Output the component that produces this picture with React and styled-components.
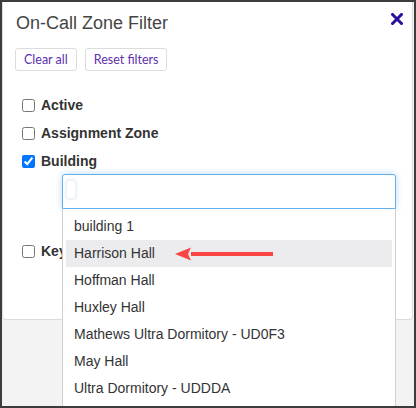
import styled, { createGlobalStyle } from "styled-components";

const GlobalStyle = createGlobalStyle`
  html, body {
    margin: 0;
    padding: 0;
    background: #3c3c3c;
  }
  * {
    box-sizing: border-box;
  }
`;

const buildings = [
  "building 1",
  "Harrison Hall",
  "Hoffman Hall",
  "Huxley Hall",
  "Mathews Ultra Dormitory - UD0F3",
  "May Hall",
  "Ultra Dormitory - UDDDA",
];

const filters = [
  { label: "Active", checked: false },
  { label: "Assignment Zone", checked: false },
  { label: "Building", checked: true },
];

const App = () => {
  return (
    <>
      <GlobalStyle />
      <Frame>
        <Modal>
          <Header>
            <Title>On-Call Zone Filter</Title>
            <CloseButton aria-label="close">
              <svg width="12" height="12" viewBox="0 0 12 12">
                <path
                  d="M1.5 1.5 L10.5 10.5 M10.5 1.5 L1.5 10.5"
                  stroke="#2a109c"
                  strokeWidth="3"
                  strokeLinecap="square"
                />
              </svg>
            </CloseButton>
          </Header>

          <ButtonRow>
            <GhostButton>Clear all</GhostButton>
            <GhostButton>Reset filters</GhostButton>
          </ButtonRow>

          <FilterList>
            {filters.map((f) => (
              <FilterRow key={f.label}>
                <Check type="checkbox" defaultChecked={f.checked} />
                <Label>{f.label}</Label>
              </FilterRow>
            ))}

            <SelectWrap>
              <SearchBox>
                <Caret />
              </SearchBox>
              <Menu>
                {buildings.map((b) => (
                  <MenuItem key={b} active={b === "Harrison Hall"}>
                    {b}
                  </MenuItem>
                ))}
              </Menu>
              {/* annotation arrow pointing at the hovered option */}
              <Arrow width="100" height="16" viewBox="0 0 100 16">
                <path d="M16 6 L98 6 L98 10 L16 10 Z" fill="#fb4444" />
                <path d="M0 8 L16 1.5 L13 8 L16 14.5 Z" fill="#fb4444" />
              </Arrow>
            </SelectWrap>

            <FilterRow>
              <Check type="checkbox" />
              <Label>Keys</Label>
            </FilterRow>
          </FilterList>
        </Modal>
      </Frame>
    </>
  );
};

const Frame = styled.div`
  position: relative;
  width: 416px;
  height: 408px;
  border: 2px solid #3c3c3c;
  background: #f3f3f3;
  overflow: hidden;
`;

const Modal = styled.div`
  width: 411px;
  height: 318px;
  background: #fff;
  border: 1px solid #dcdcdc;
  border-top: none;
  border-radius: 0 0 4px 4px;
  padding: 0 12px;
`;

const Header = styled.div`
  display: flex;
  justify-content: space-between;
  align-items: flex-start;
  padding-top: 9px;
`;

const Title = styled.h2`
  margin: 0;
  padding-left: 1px;
  font-family: "Liberation Sans", Arial, sans-serif;
  font-weight: 400;
  font-size: 18px;
  line-height: 24px;
  color: #454545;
`;

const CloseButton = styled.button`
  border: none;
  background: none;
  padding: 0;
  margin: 2px -3px 0 0;
  display: flex;
  cursor: pointer;
`;

const ButtonRow = styled.div`
  display: flex;
  gap: 8px;
  margin-top: 13px;
`;

const GhostButton = styled.button`
  height: 23px;
  padding: 0 8px;
  border: 1px solid #dcdcdc;
  border-radius: 3px;
  background: #fff;
  font-family: Lato, "Open Sans", sans-serif;
  font-size: 12.5px;
  color: #5b30ad;
  cursor: pointer;
`;

const FilterList = styled.div`
  margin-top: 20px;
  padding-left: 7px;
`;

const FilterRow = styled.label`
  display: flex;
  align-items: center;
  gap: 6px;
  height: 28px;
`;

const Check = styled.input`
  width: 13px;
  height: 13px;
  margin: 0;
`;

const Label = styled.span`
  font-family: "Liberation Sans", Arial, sans-serif;
  font-weight: 700;
  font-size: 14px;
  color: #333;
`;

const SelectWrap = styled.div`
  position: relative;
  margin: -1px 0 28px 40px;
  width: 334px;
`;

const SearchBox = styled.div`
  height: 35px;
  border: 1px solid #66afe9;
  border-radius: 3px 3px 0 0;
  box-shadow: 0 0 7px rgba(102, 175, 233, 0.45);
  background: #fff;
  padding: 5px 3px;
`;

const Caret = styled.div`
  width: 10px;
  height: 19px;
  border-radius: 3px;
  background: #fff;
  box-shadow: 0 0 3px rgba(102, 175, 233, 0.35);
  border: 1px solid #eef3f8;
`;

const Menu = styled.div`
  position: absolute;
  top: 35px;
  left: 0;
  width: 100%;
  height: 220px;
  padding: 4px 3px;
  background: #fff;
  border-left: 1px solid #cfcfcf;
  border-right: 1px solid #cfcfcf;
  overflow: hidden;
  z-index: 2;
`;

const MenuItem = styled.div`
  height: 27px;
  line-height: 27px;
  padding: 0 8px;
  font-family: "Liberation Sans", Arial, sans-serif;
  font-size: 14px;
  color: #333;
  white-space: nowrap;
  background: ${({ active }) => (active ? "#ececee" : "transparent")};
`;

const Arrow = styled.svg`
  position: absolute;
  left: 113px;
  top: 72px;
  z-index: 3;
`;

export default App;
